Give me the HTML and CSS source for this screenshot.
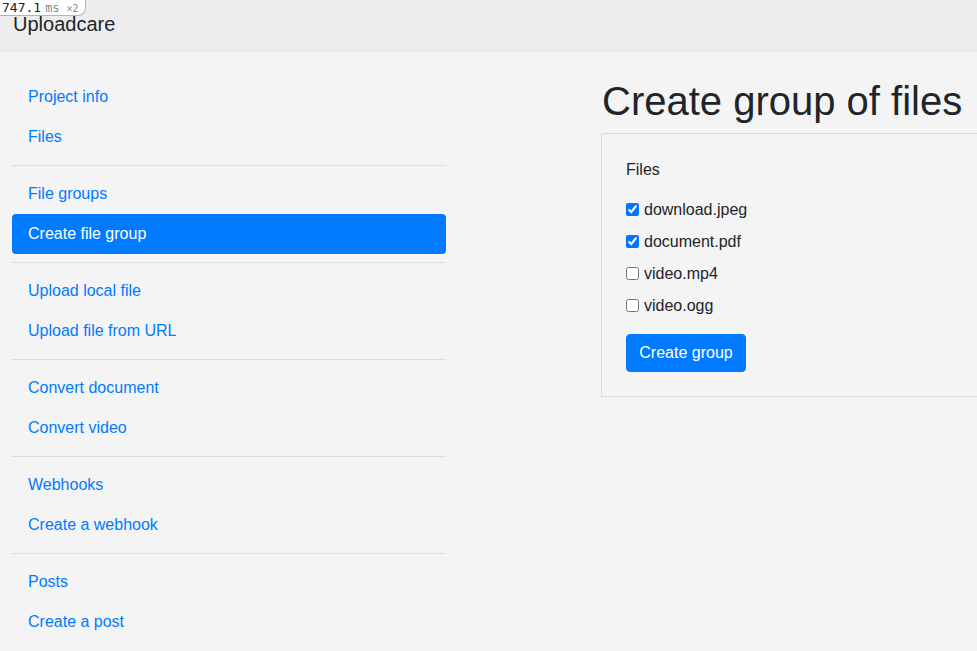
FILE: index.html
```html
<!DOCTYPE html>
<html>
<head>
<meta charset="utf-8">
<title>Uploadcare</title>
<link rel="stylesheet" href="styles.css">
</head>
<body>
<div class="timer"><span class="t-val">747.1</span><span class="t-unit">ms</span><span class="t-count">×2</span></div>
<header class="topbar">Uploadcare</header>
<div class="layout">
  <nav class="sidebar">
    <a class="nav-link" href="#">Project info</a>
    <a class="nav-link" href="#">Files</a>
    <hr class="sep">
    <a class="nav-link" href="#">File groups</a>
    <a class="nav-link active" href="#">Create file group</a>
    <hr class="sep">
    <a class="nav-link" href="#">Upload local file</a>
    <a class="nav-link" href="#">Upload file from URL</a>
    <hr class="sep">
    <a class="nav-link" href="#">Convert document</a>
    <a class="nav-link" href="#">Convert video</a>
    <hr class="sep">
    <a class="nav-link" href="#">Webhooks</a>
    <a class="nav-link" href="#">Create a webhook</a>
    <hr class="sep">
    <a class="nav-link" href="#">Posts</a>
    <a class="nav-link" href="#">Create a post</a>
  </nav>
  <main class="main">
    <h1 class="title">Create group of files</h1>
    <form class="card">
      <div class="label">Files</div>
      <label class="check"><input type="checkbox" checked><span>download.jpeg</span></label>
      <label class="check"><input type="checkbox" checked><span>document.pdf</span></label>
      <label class="check"><input type="checkbox"><span>video.mp4</span></label>
      <label class="check"><input type="checkbox"><span>video.ogg</span></label>
      <button type="button" class="btn">Create group</button>
    </form>
  </main>
</div>
</body>
</html>
```
FILE: styles.css
```css
html, body {
  margin: 0;
  padding: 0;
}
body {
  background: #f4f4f4;
  font-family: "Liberation Sans", Arial, sans-serif;
  font-size: 16px;
  line-height: 24px;
  color: #212529;
  overflow: hidden;
  width: 977px;
  height: 651px;
}
.timer {
  position: absolute;
  top: 0;
  left: 0;
  height: 15px;
  padding: 0 6px 0 2px;
  background: #fff;
  border: 1px solid #b5b5b5;
  border-top: none;
  border-left: none;
  border-bottom-right-radius: 8px;
  font-family: "DejaVu Sans Mono", monospace;
  font-size: 13px;
  line-height: 15px;
  display: flex;
  align-items: baseline;
  gap: 4px;
  z-index: 5;
}
.t-val { color: #222; }
.t-unit { color: #8a8a8a; font-size: 12px; }
.t-count { color: #8a8a8a; font-size: 10px; margin-left: 3px; }
.topbar {
  background: #ededee;
  height: 34px;
  padding: 9px 13px;
  font-size: 20px;
  line-height: 30px;
  color: #212529;
}
.layout {
  display: flex;
  padding: 24px 0 0 12px;
  gap: 155px;
}
.sidebar {
  width: 434px;
  flex: none;
  display: flex;
  flex-direction: column;
  margin-top: 1px;
}
.nav-link {
  display: block;
  padding: 8px 16px;
  color: #007bff;
  text-decoration: none;
  border-radius: 4px;
}
.nav-link.active {
  background: #007bff;
  color: #fff;
}
.sep {
  border: none;
  border-top: 1px solid #dfdfdf;
  margin: 8px 0;
  height: 0;
}
.main {
  flex: none;
  width: 500px;
}
.title {
  margin: 1px 0 8px 1px;
  font-size: 40px;
  line-height: 48px;
  font-weight: 400;
  color: #212529;
}
.card {
  border: 1px solid #d9d9d9;
  padding: 24px;
  display: flex;
  flex-direction: column;
  align-items: flex-start;
}
.label {
  margin-bottom: 15px;
}
.check {
  display: flex;
  align-items: center;
  height: 24px;
  margin-bottom: 8px;
}
.check input {
  margin: 1px 5px 0 0;
  width: 13px;
  height: 13px;
}
.check span {
  position: relative;
  top: 1px;
}
.btn {
  margin-top: 9px;
  font-family: "Liberation Sans", Arial, sans-serif;
  font-size: 16px;
  line-height: 24px;
  padding: 6px 12px;
  width: 120px;
  border: 1px solid #007bff;
  background: #007bff;
  color: #fff;
  border-radius: 4px;
}
```
